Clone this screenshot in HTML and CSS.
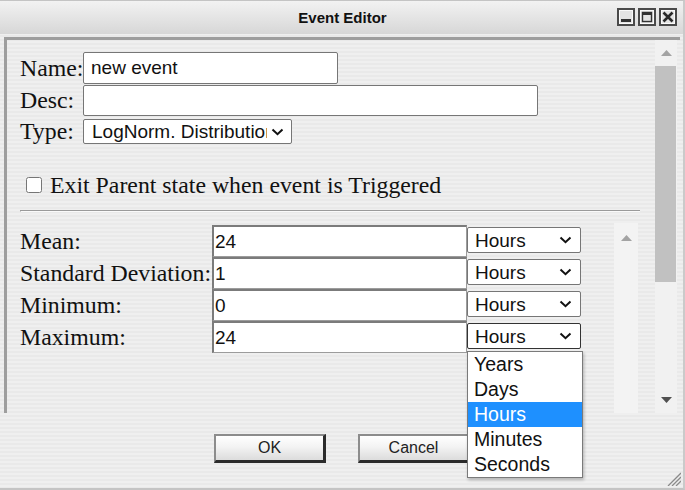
FILE: index.html
```html
<!DOCTYPE html>
<html>
<head>
<meta charset="utf-8">
<title>Event Editor</title>
<link rel="stylesheet" href="styles.css">
</head>
<body>
<div class="window">
  <div class="titlebar">
    <div class="spacer"></div>
    <div class="title">Event Editor</div>
    <div class="controls">
      <span class="ctl"><svg width="18" height="18" viewBox="0 0 18 18"><rect x="1" y="1" width="16" height="16" fill="#e4e4e4" stroke="#4a4a4a" stroke-width="2"/><rect x="2.5" y="2.5" width="13" height="13" fill="none" stroke="#fafafa" stroke-width="1"/><rect x="4" y="11" width="10" height="3" fill="#333"/></svg></span>
      <span class="ctl"><svg width="18" height="18" viewBox="0 0 18 18"><rect x="1" y="1" width="16" height="16" fill="#e4e4e4" stroke="#4a4a4a" stroke-width="2"/><rect x="2.5" y="2.5" width="13" height="13" fill="none" stroke="#fafafa" stroke-width="1"/><rect x="4.5" y="4.5" width="9" height="9" fill="none" stroke="#333" stroke-width="1.4"/><rect x="4" y="4" width="10" height="3" fill="#333"/></svg></span>
      <span class="ctl"><svg width="18" height="18" viewBox="0 0 18 18"><rect x="1" y="1" width="16" height="16" fill="#e4e4e4" stroke="#4a4a4a" stroke-width="2"/><rect x="2.5" y="2.5" width="13" height="13" fill="none" stroke="#fafafa" stroke-width="1"/><path d="M4.5 4.5 L13.5 13.5 M13.5 4.5 L4.5 13.5" stroke="#2a2a2a" stroke-width="2.6"/></svg></span>
    </div>
  </div>
  <div class="body">
    <div class="panel">
      <div class="form">
        <div class="frow frow-name"><span class="lbl">Name:</span><input class="txt txt-name" type="text" value="new event"></div>
        <div class="frow frow-desc"><span class="lbl">Desc:</span><input class="txt txt-desc" type="text" value=""></div>
        <div class="frow frow-type"><span class="lbl">Type:</span><select class="sel sel-type"><option>LogNorm. Distribution</option></select></div>
        <div class="check-row"><input class="chk" type="checkbox"><span class="lbl">Exit Parent state when event is Triggered</span></div>
        <div class="rule"></div>
        <div class="params">
          <div class="grid">
            <span class="lbl">Mean:</span><input class="pin" type="text" value="24"><div class="unit"><select class="sel sel-unit"><option>Hours</option></select></div>
            <span class="lbl">Standard Deviation:</span><input class="pin" type="text" value="1"><div class="unit"><select class="sel sel-unit"><option>Hours</option></select></div>
            <span class="lbl">Minimum:</span><input class="pin" type="text" value="0"><div class="unit"><select class="sel sel-unit"><option>Hours</option></select></div>
            <span class="lbl">Maximum:</span><input class="pin" type="text" value="24"><div class="unit"><select class="sel sel-unit sel-open"><option>Hours</option></select>
              <div class="dropdown">
                <div class="opt">Years</div>
                <div class="opt">Days</div>
                <div class="opt opt-active">Hours</div>
                <div class="opt">Minutes</div>
                <div class="opt">Seconds</div>
              </div>
            </div>
          </div>
          <div class="inner-scroll"><svg class="arrow-up" width="11" height="6" viewBox="0 0 11 6"><path d="M0 6 L5.5 0 L11 6 Z" fill="#a3a3a3"/></svg></div>
        </div>
      </div>
      <div class="vscroll">
        <div class="vs-btn"><svg width="11" height="6" viewBox="0 0 11 6"><path d="M0 6 L5.5 0 L11 6 Z" fill="#a3a3a3"/></svg></div>
        <div class="vs-thumb"></div>
        <div class="vs-track"></div>
        <div class="vs-btn vs-down"><svg width="11" height="6" viewBox="0 0 11 6"><path d="M0 0 L11 0 L5.5 6 Z" fill="#505050"/></svg></div>
      </div>
    </div>
  </div>
  <div class="footer">
    <button class="btn">OK</button>
    <button class="btn">Cancel</button>
  </div>
  <svg class="grip" width="16" height="16" viewBox="0 0 16 16"><path d="M16 3 L3 16 M16 7 L7 16 M16 11 L11 16" stroke="#8a8a8a" stroke-width="1.3"/></svg>
</div>
</body>
</html>
```

FILE: styles.css
```css
html, body {
  margin: 0;
  padding: 0;
}
body {
  width: 685px;
  height: 490px;
  overflow: hidden;
  font-family: "Liberation Sans", Arial, sans-serif;
  background: #ececec;
}
.window {
  position: relative;
  width: 685px;
  height: 490px;
  box-sizing: border-box;
  border-top: 1px solid #c4c4c4;
  border-bottom: 2px solid #c4c4c4;
  border-right: 2px solid #cacaca;
  background: repeating-linear-gradient(to bottom, #efefef 0, #efefef 2px, #e9e9e9 2px, #e9e9e9 4px);
  display: flex;
  flex-direction: column;
}
.titlebar {
  height: 33px;
  display: grid;
  grid-template-columns: 1fr auto 1fr;
  align-items: center;
  background: linear-gradient(to bottom, #f2f2f2, #d7d7d7);
}
.title {
  font-weight: bold;
  font-size: 15px;
  color: #111;
  padding-left: 2px;
}
.controls {
  justify-self: end;
  display: flex;
  gap: 3px;
  padding-right: 6px;
  padding-bottom: 1px;
}
.ctl {
  display: block;
  width: 18px;
  height: 18px;
}
.ctl svg {
  display: block;
}
.body {
  padding: 3px 3px 0 4px;
}
.panel {
  height: 376px;
  box-sizing: border-box;
  border-top: 3px solid #9e9e9e;
  border-left: 3px solid #9e9e9e;
  display: flex;
}
.form {
  flex: 1;
  min-width: 0;
  padding: 12px 15px 0 13px;
  display: flex;
  flex-direction: column;
}
.lbl {
  font-family: "Liberation Serif", "Times New Roman", serif;
  font-size: 23.8px;
  color: #111;
  white-space: nowrap;
}
.frow {
  display: grid;
  grid-template-columns: 63px auto;
  align-items: center;
  justify-content: start;
}
.frow-name { height: 32px; }
.frow-desc { height: 31px; margin-top: 1px; }
.frow-type { height: 25px; margin-top: 2px; }
.txt {
  box-sizing: border-box;
  font-family: "Liberation Sans", Arial, sans-serif;
  font-size: 19px;
  color: #111;
  border: 1px solid #767676;
  border-radius: 2px;
  background: #fff;
  padding: 0 7px;
  margin: 0;
  outline: none;
}
.txt-name { width: 255px; height: 32px; }
.txt-desc { width: 455px; height: 31px; }
.sel {
  -webkit-appearance: none;
  appearance: none;
  box-sizing: border-box;
  font-family: "Liberation Sans", Arial, sans-serif;
  font-size: 19px;
  color: #111;
  background-color: #fff;
  background-image: url("data:image/svg+xml;utf8,<svg xmlns='http://www.w3.org/2000/svg' width='13' height='8' viewBox='0 0 13 8'><path d='M1.5 1.5 L6.5 6.2 L11.5 1.5' fill='none' stroke='%23111' stroke-width='2'/></svg>");
  background-repeat: no-repeat;
  background-position: right 7px center;
  border: 1px solid #767676;
  border-radius: 2px;
  margin: 0;
  padding: 0 24px 0 8px;
  outline: none;
}
.sel-type {
  width: 209px;
  height: 25px;
}
.check-row {
  display: flex;
  align-items: center;
  height: 32px;
  margin-top: 26px;
}
.chk {
  width: 16px;
  height: 16px;
  margin: 0 8px 0 6px;
}
.rule {
  margin-top: 9px;
  height: 0;
  border-top: 1px solid #9a9a9a;
  border-left: 1px solid #9a9a9a;
  border-bottom: 1px solid #fafafa;
}
.params {
  flex: 1;
  display: flex;
  margin-top: 13px;
}
.grid {
  flex: 1;
  display: grid;
  grid-template-columns: 192px 255px 114px;
  grid-auto-rows: 32px;
  align-content: start;
  align-items: center;
}
.pin {
  box-sizing: border-box;
  width: 255px;
  height: 32px;
  font-family: "Liberation Sans", Arial, sans-serif;
  font-size: 19px;
  color: #111;
  background: #fff;
  border-style: solid;
  border-width: 2px 1px 1px 2px;
  border-color: #7b7b7b #9c9c9c #9c9c9c #7b7b7b;
  padding: 0 0 0 1px;
  margin: 0;
  outline: none;
}
.unit {
  position: relative;
  height: 32px;
}
.sel-unit {
  width: 114px;
  height: 26px;
  margin-top: 2px;
  padding-left: 7px;
  background-position: right 8px center;
}
.sel-open {
  border-color: #333;
}
.dropdown {
  position: absolute;
  top: 30px;
  left: 0;
  width: 116px;
  box-sizing: border-box;
  background: #fff;
  border: 1px solid #7a7a7a;
  box-shadow: 1px 2px 3px rgba(0, 0, 0, 0.25);
  z-index: 5;
}
.opt {
  height: 25px;
  line-height: 25px;
  padding-left: 6px;
  font-family: "Liberation Sans", Arial, sans-serif;
  font-size: 19.5px;
  color: #111;
}
.opt-active {
  background: #1e90ff;
  color: #fff;
}
.inner-scroll {
  width: 24px;
  margin-right: 2px;
  margin-top: -2px;
  background: #f3f3f3;
  display: flex;
  justify-content: center;
}
.arrow-up {
  margin-top: 12px;
}
.vscroll {
  width: 22px;
  margin-right: 3px;
  background: #f1f1f1;
  display: flex;
  flex-direction: column;
}
.vs-btn {
  height: 26px;
  display: flex;
  align-items: center;
  justify-content: center;
}
.vs-thumb {
  height: 216px;
  width: 21px;
  background: #c1c1c1;
}
.vs-track {
  flex: 1;
}
.vs-down {
  height: 22px;
  margin-bottom: 2px;
}
.footer {
  display: flex;
  gap: 32px;
  padding: 21px 0 0 214px;
}
.btn {
  box-sizing: border-box;
  width: 112px;
  height: 29px;
  margin: 0;
  padding: 0;
  font-family: "Liberation Sans", Arial, sans-serif;
  font-size: 16px;
  color: #222;
  border-style: solid;
  border-width: 2px 3px 3px 2px;
  border-color: #8c8c8c #2b2b2b #2b2b2b #8c8c8c;
  border-radius: 0;
  background: linear-gradient(to bottom, #ffffff, #f3f3f3 45%, #dcdcdc);
}
.grip {
  position: absolute;
  right: 2px;
  bottom: 2px;
}
```
